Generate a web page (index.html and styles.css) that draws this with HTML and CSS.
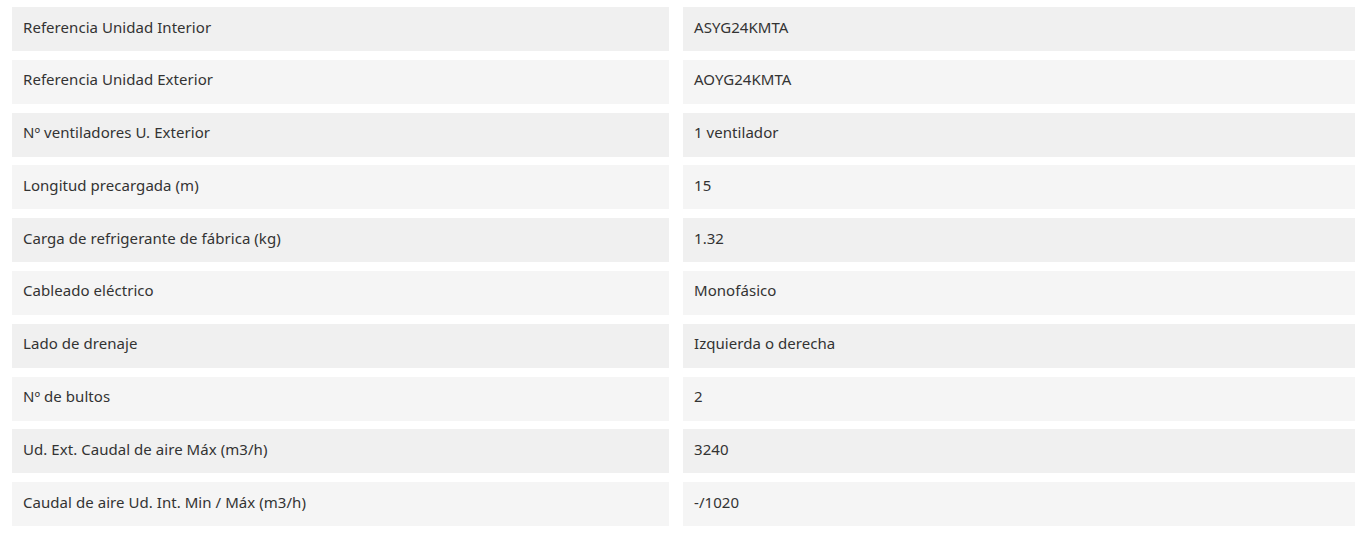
FILE: index.html
```html
<!DOCTYPE html>
<html lang="es">
<head>
<meta charset="utf-8">
<title>Especificaciones</title>
<link rel="stylesheet" href="styles.css">
</head>
<body>
<div class="specs">
  <div class="row"><div class="cell">Referencia Unidad Interior</div><div class="cell">ASYG24KMTA</div></div>
  <div class="row"><div class="cell">Referencia Unidad Exterior</div><div class="cell">AOYG24KMTA</div></div>
  <div class="row"><div class="cell">Nº ventiladores U. Exterior</div><div class="cell">1 ventilador</div></div>
  <div class="row"><div class="cell">Longitud precargada (m)</div><div class="cell">15</div></div>
  <div class="row"><div class="cell">Carga de refrigerante de fábrica (kg)</div><div class="cell">1.32</div></div>
  <div class="row"><div class="cell">Cableado eléctrico</div><div class="cell">Monofásico</div></div>
  <div class="row"><div class="cell">Lado de drenaje</div><div class="cell">Izquierda o derecha</div></div>
  <div class="row"><div class="cell">Nº de bultos</div><div class="cell">2</div></div>
  <div class="row"><div class="cell">Ud. Ext. Caudal de aire Máx (m3/h)</div><div class="cell">3240</div></div>
  <div class="row"><div class="cell">Caudal de aire Ud. Int. Min / Máx (m3/h)</div><div class="cell">-/1020</div></div>
</div>
</body>
</html>
```
FILE: styles.css
```css
html, body {
  margin: 0;
  padding: 0;
  background: #ffffff;
}
body {
  font-family: "Noto Sans", "DejaVu Sans", sans-serif;
  font-size: 15px;
  color: #333333;
}
.specs {
  display: flex;
  flex-direction: column;
  gap: 8.8px;
  padding: 7px 13px 0 12px;
}
.row {
  display: grid;
  grid-template-columns: 657px 1fr;
  column-gap: 14px;
}
.cell {
  height: 44px;
  display: flex;
  align-items: center;
  padding: 0 11px 5px;
  background: #f5f5f5;
  box-sizing: border-box;
  letter-spacing: 0.05px;
}
.row:nth-child(odd) .cell {
  background: #f0f0f0;
}
```
